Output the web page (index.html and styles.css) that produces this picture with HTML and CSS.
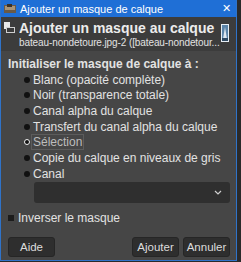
FILE: index.html
```html
<!DOCTYPE html>
<html lang="fr">
  <head>
    <meta charset="UTF-8" />
    <title>Ajouter un masque de calque</title>
    <link rel="stylesheet" href="styles.css">
  </head>
  <body>
    <div class="window">
      <div class="titlebar">
        <svg class="app-icon" width="12" height="10" viewBox="0 0 12 10">
          <rect x="0" y="1" width="12" height="8" fill="#6b5a45" />
          <rect x="1" y="2" width="10" height="4" fill="#a89478" />
          <rect x="3" y="0" width="5" height="3" fill="#3a3026" />
        </svg>
        <span class="title">Ajouter un masque de calque</span>
        <span class="close">✕</span>
      </div>

      <div class="header">
        <svg class="header-icon" width="11" height="12" viewBox="0 0 11 12">
          <rect x="0" y="0" width="6" height="7" fill="#e8e8e8" />
          <rect x="2" y="5" width="9" height="6" fill="#cfcfcf" />
          <rect x="3" y="6" width="7" height="4" fill="#3b3b3b" />
        </svg>
        <div class="header-text">
          <div class="header-title">Ajouter un masque au calque</div>
          <div class="header-sub">bateau-nondetoure.jpg-2 ([bateau-nondetour...</div>
        </div>
        <svg class="thumb" width="8" height="18" viewBox="0 0 8 18">
          <rect x="0" y="0" width="8" height="18" fill="#e6eef5" />
          <rect x="1" y="1" width="6" height="16" fill="#5b84a8" />
          <path d="M2 15 L4 3 L6 15 Z" fill="#dfe7ef" />
          <rect x="1" y="14" width="6" height="3" fill="#2f4a63" />
        </svg>
      </div>

      <div class="body">
        <div class="group-label">Initialiser le masque de calque à :</div>
        <ul class="options">
          <li><span class="dot"></span>Blanc (opacité complète)</li>
          <li><span class="dot"></span>Noir (transparence totale)</li>
          <li><span class="dot"></span>Canal alpha du calque</li>
          <li><span class="dot"></span>Transfert du canal alpha du calque</li>
          <li class="selected"><span class="dot"></span><span class="focus">Sélection</span></li>
          <li><span class="dot"></span>Copie du calque en niveaux de gris</li>
          <li><span class="dot"></span>Canal</li>
        </ul>
        <div class="combo">
          <svg width="8" height="5" viewBox="0 0 8 5">
            <path d="M1 1 L4 4 L7 1" stroke="#cfcfcf" stroke-width="1.2" fill="none" />
          </svg>
        </div>
        <div class="check"><span class="box"></span>Inverser le masque</div>

        <div class="buttons">
          <button>Aide</button>
          <div class="spacer"></div>
          <button>Ajouter</button>
          <button>Annuler</button>
        </div>
      </div>
    </div>
  </body>
</html>
```

FILE: styles.css
```css
body {
  margin: 0;
  background-color: #2a2a2a;
  font-family: "Liberation Sans", Arial, sans-serif;
  font-size: 12px;
  color: #e2e2e2;
  white-space: nowrap;
}
.window {
  width: 235px;
  height: 260px;
  border: 1px solid #2f73c9;
  border-top: none;
  background-color: #464646;
  display: flex;
  flex-direction: column;
  overflow: hidden;
}
.titlebar {
  height: 17px;
  background-color: #1f6fd6;
  display: flex;
  align-items: center;
  padding-left: 3px;
  color: white;
  font-size: 11px;
}
.app-icon {
  margin-right: 4px;
}
.title {
  flex: 1;
}
.close {
  width: 20px;
  text-align: center;
  font-size: 11px;
}
.header {
  height: 32px;
  background-color: #3c3c3c;
  display: flex;
  align-items: flex-start;
  padding: 2px 7px 0 3px;
}
.header-icon {
  margin-top: 3px;
  margin-right: 4px;
}
.header-text {
  flex: 1;
  overflow: hidden;
}
.header-title {
  font-weight: bold;
  font-size: 14px;
  line-height: 18px;
  color: #ececec;
}
.header-sub {
  font-size: 10px;
  letter-spacing: -0.1px;
  line-height: 12px;
}
.thumb {
  margin-top: 5px;
}
.body {
  flex: 1;
  padding: 5px 6px 0 7px;
  display: flex;
  flex-direction: column;
}
.group-label {
  font-weight: bold;
  line-height: 16px;
}
.options {
  list-style: none;
  margin: 0;
  padding: 0 0 0 16px;
}
.options li {
  height: 15.67px;
  display: flex;
  align-items: center;
}
.dot {
  width: 6px;
  height: 6px;
  border-radius: 50%;
  background-color: #111;
  margin-right: 3px;
  flex-shrink: 0;
}
.selected .dot {
  width: 4px;
  height: 4px;
  background-color: #111;
  border: 1px solid #f0f0f0;
}
.focus {
  border: 1px solid #5c5c5c;
  line-height: 14px;
  padding: 0 1px;
  margin-left: -2px;
  color: #bdbdbd;
}
.combo {
  margin-left: 26px;
  height: 21px;
  background-color: #2f2f2f;
  border-radius: 3px;
  display: flex;
  align-items: center;
  justify-content: flex-end;
  padding-right: 8px;
}
.check {
  margin-top: 7px;
  display: flex;
  align-items: center;
  line-height: 16px;
}
.box {
  width: 6px;
  height: 6px;
  background-color: #1c1c1c;
  margin-right: 4px;
}
.buttons {
  display: flex;
  gap: 4px;
  margin-top: 11px;
}
.spacer {
  flex: 1;
}
button {
  height: 20px;
  width: 47px;
  padding: 0;
  background-color: #2e2e2e;
  border: 1px solid #262626;
  border-radius: 3px;
  color: #dcdcdc;
  font-family: "Liberation Sans", Arial, sans-serif;
  font-size: 11.5px;
}
```
